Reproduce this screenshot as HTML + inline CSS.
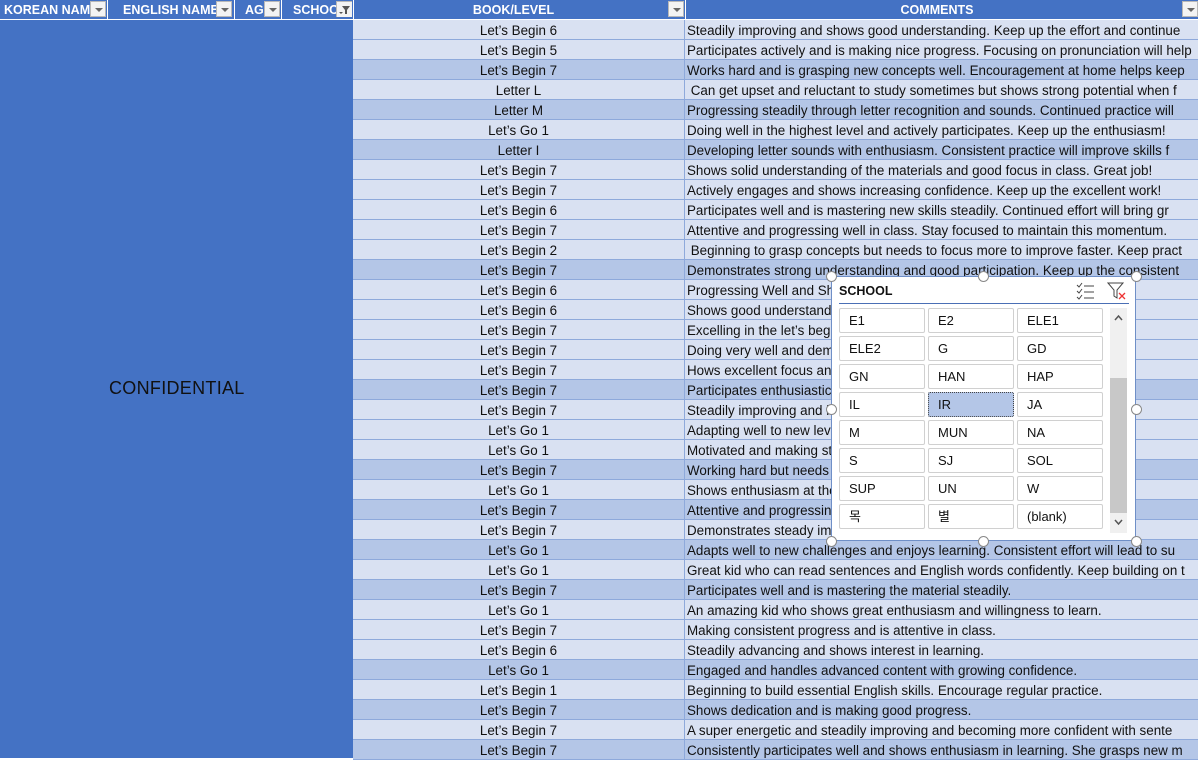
<!DOCTYPE html>
<html><head><meta charset="utf-8"><style>
*{margin:0;padding:0;box-sizing:border-box}
body{width:1198px;height:758px;overflow:hidden;background:#fff;font-family:"Liberation Sans","Noto Sans CJK KR",sans-serif;position:relative}
.hdr{position:absolute;top:0;height:19px;background:#4472c4;color:#fff;font-weight:bold;font-size:12.5px;line-height:20px;overflow:hidden;white-space:nowrap}
.dd{position:absolute;top:1px;width:16px;height:16px;background:#f3f3f3;border:1px solid #b8b8b8}
.dd:after{content:"";position:absolute;left:4px;top:6px;border-left:4px solid transparent;border-right:4px solid transparent;border-top:4px solid #666}
.left{position:absolute;left:0;top:20px;width:353px;height:738px;background:#4472c4}
.conf{position:absolute;left:109px;top:378px;font-size:18px;color:#111;letter-spacing:0.3px}
.row{position:absolute;left:353px;width:845px;height:20px;background:#d9e1f2;border-bottom:1px solid #8ea9db;font-size:13.4px;color:#111;line-height:21px;white-space:pre;overflow:hidden}
.row.d{background:#b4c6e7}
.row .b{position:absolute;left:0;width:332px;text-align:center;border-right:1px solid #8ea9db;height:20px}
.row .c{position:absolute;left:334px;width:520px}
.sl{position:absolute;left:831px;top:276px;width:305px;height:265px;background:#fff;border:1px solid #6f8fc7}
.btn{position:absolute;width:86px;height:25px;border:1px solid #d0d0d0;border-radius:2px;font-size:13px;line-height:24px;padding-left:9px;color:#111;background:#fff}
.btn.sel{background:#b4c6e7;border:1px dotted #444}
.h{position:absolute;width:11px;height:11px;border-radius:50%;background:#fff;border:1px solid #888}
</style></head><body>
<div class="hdr" style="left:0;width:107px;padding-left:4px">KOREAN NAM</div><div class="dd" style="left:90px"></div>
<div class="hdr" style="left:108px;width:126px;padding-left:15px">ENGLISH NAME</div><div class="dd" style="left:216px"></div>
<div class="hdr" style="left:235px;width:46px;padding-left:10px">AG</div><div class="dd" style="left:264px"></div>
<div class="hdr" style="left:282px;width:71px;padding-left:11px">SCHOO</div>
<div class="dd" style="left:336px"></div>
<div style="position:absolute;left:337px;top:2px;width:15px;height:15px;background:#f3f3f3"><svg width="15" height="15"><path d="M5 4h8l-3 4v4h-2v-4z" fill="#555"/><path d="M2 10l2 2 2-2z" fill="#555"/></svg></div>
<div class="hdr" style="left:354px;width:331px;text-align:center;padding-right:12px">BOOK/LEVEL</div><div class="dd" style="left:668px"></div>
<div class="hdr" style="left:686px;width:512px;text-align:center;padding-right:10px">COMMENTS</div><div class="dd" style="left:1182px"></div>
<div class="left"></div>
<div class="conf">CONFIDENTIAL</div>
<div id="rows"></div>
<script>
var d=[
["Let’s Begin 6","Steadily improving and shows good understanding. Keep up the effort and continue"],
["Let’s Begin 5","Participates actively and is making nice progress. Focusing on pronunciation will help"],
["Let’s Begin 7","Works hard and is grasping new concepts well. Encouragement at home helps keep"],
["Letter L"," Can get upset and reluctant to study sometimes but shows strong potential when f"],
["Letter M","Progressing steadily through letter recognition and sounds. Continued practice will"],
["Let’s Go 1","Doing well in the highest level and actively participates. Keep up the enthusiasm!"],
["Letter I","Developing letter sounds with enthusiasm. Consistent practice will improve skills f"],
["Let’s Begin 7","Shows solid understanding of the materials and good focus in class. Great job!"],
["Let’s Begin 7","Actively engages and shows increasing confidence. Keep up the excellent work!"],
["Let’s Begin 6","Participates well and is mastering new skills steadily. Continued effort will bring gr"],
["Let’s Begin 7","Attentive and progressing well in class. Stay focused to maintain this momentum."],
["Let’s Begin 2"," Beginning to grasp concepts but needs to focus more to improve faster. Keep pract"],
["Let’s Begin 7","Demonstrates strong understanding and good participation. Keep up the consistent"],
["Let’s Begin 6","Progressing Well and Shows growing confidence with confidence with"],
["Let’s Begin 6","Shows good understanding and is steadily building c"],
["Let’s Begin 7","Excelling in the let’s begin series. Continued practice will lea"],
["Let’s Begin 7","Doing very well and demonstrates great progress"],
["Let’s Begin 7","Hows excellent focus and is working to maintain thi"],
["Let’s Begin 7","Participates enthusiastically and is nurturing th"],
["Let’s Begin 7","Steadily improving and is making great re"],
["Let’s Go 1","Adapting well to new levels and is working week by w"],
["Let’s Go 1","Motivated and making steady progress, will be very he"],
["Let’s Begin 7","Working hard but needs more practice, more pract"],
["Let’s Go 1","Shows enthusiasm at the level and keep up the gre"],
["Let’s Begin 7","Attentive and progressing with new concepts."],
["Let’s Begin 7","Demonstrates steady improvement and encouragi"],
["Let’s Go 1","Adapts well to new challenges and enjoys learning. Consistent effort will lead to su"],
["Let’s Go 1","Great kid who can read sentences and English words confidently. Keep building on t"],
["Let’s Begin 7","Participates well and is mastering the material steadily."],
["Let’s Go 1","An amazing kid who shows great enthusiasm and willingness to learn."],
["Let’s Begin 7","Making consistent progress and is attentive in class."],
["Let’s Begin 6","Steadily advancing and shows interest in learning."],
["Let’s Go 1","Engaged and handles advanced content with growing confidence."],
["Let’s Begin 1","Beginning to build essential English skills. Encourage regular practice."],
["Let’s Begin 7","Shows dedication and is making good progress."],
["Let’s Begin 7","A super energetic and steadily improving and becoming more confident with sente"],
["Let’s Begin 7","Consistently participates well and shows enthusiasm in learning. She grasps new m"]];
var dk=[2,4,6,12,18,22,24,26,28,32,34,36],h="";
d.forEach(function(r,i){h+='<div class="row'+(dk.indexOf(i)>=0?' d':'')+'" style="top:'+(20+i*20)+'px"><div class="b">'+r[0]+'</div><div class="c">'+r[1]+'</div></div>';});
document.getElementById('rows').innerHTML=h;
</script>
<div class="sl">
<div style="position:absolute;left:7px;top:7px;font-weight:bold;font-size:12.5px;color:#111">SCHOOL</div>
<svg style="position:absolute;left:244px;top:5px" width="20" height="18"><path d="M1 3l2 2 3-4M1 9l2 2 3-4M1 15l2 2 3-4" stroke="#444" fill="none"/><path d="M8 4h10M8 10h10M8 16h10" stroke="#444"/></svg>
<svg style="position:absolute;left:275px;top:4px" width="20" height="20"><path d="M1 2h15l-6 7v8l-3-2v-6z" stroke="#444" fill="none"/><path d="M12 12l6 6M18 12l-6 6" stroke="#e33" stroke-width="1.3"/></svg>
<div style="position:absolute;left:7px;top:26px;width:290px;height:1px;background:#4a6fb5"></div>
<div id="bt"></div>
<div style="position:absolute;left:278px;top:31px;width:17px;height:225px;background:#f0f0f0"><div style="position:absolute;left:0;top:70px;width:17px;height:135px;background:#c8c8c8"></div>
<svg style="position:absolute;left:3px;top:6px" width="11" height="8"><path d="M2 6l3.5-4 3.5 4" stroke="#555" stroke-width="1.5" fill="none"/></svg>
<svg style="position:absolute;left:3px;top:210px" width="11" height="8"><path d="M2 2l3.5 4 3.5-4" stroke="#555" stroke-width="1.5" fill="none"/></svg></div>
</div>
<script>
var t=["E1","E2","ELE1","ELE2","G","GD","GN","HAN","HAP","IL","IR","JA","M","MUN","NA","S","SJ","SOL","SUP","UN","W","목","별","(blank)"],x=[7,96,185],s="";
t.forEach(function(v,i){s+='<div class="btn'+(v=="IR"?' sel':'')+'" style="left:'+x[i%3]+'px;top:'+(31+Math.floor(i/3)*28)+'px">'+v+'</div>';});
document.getElementById('bt').innerHTML=s;
</script>
<div class="h" style="left:826px;top:271px"></div><div class="h" style="left:978px;top:271px"></div><div class="h" style="left:1131px;top:271px"></div>
<div class="h" style="left:826px;top:404px"></div><div class="h" style="left:1131px;top:404px"></div>
<div class="h" style="left:826px;top:536px"></div><div class="h" style="left:978px;top:536px"></div><div class="h" style="left:1131px;top:536px"></div>
</body></html>
